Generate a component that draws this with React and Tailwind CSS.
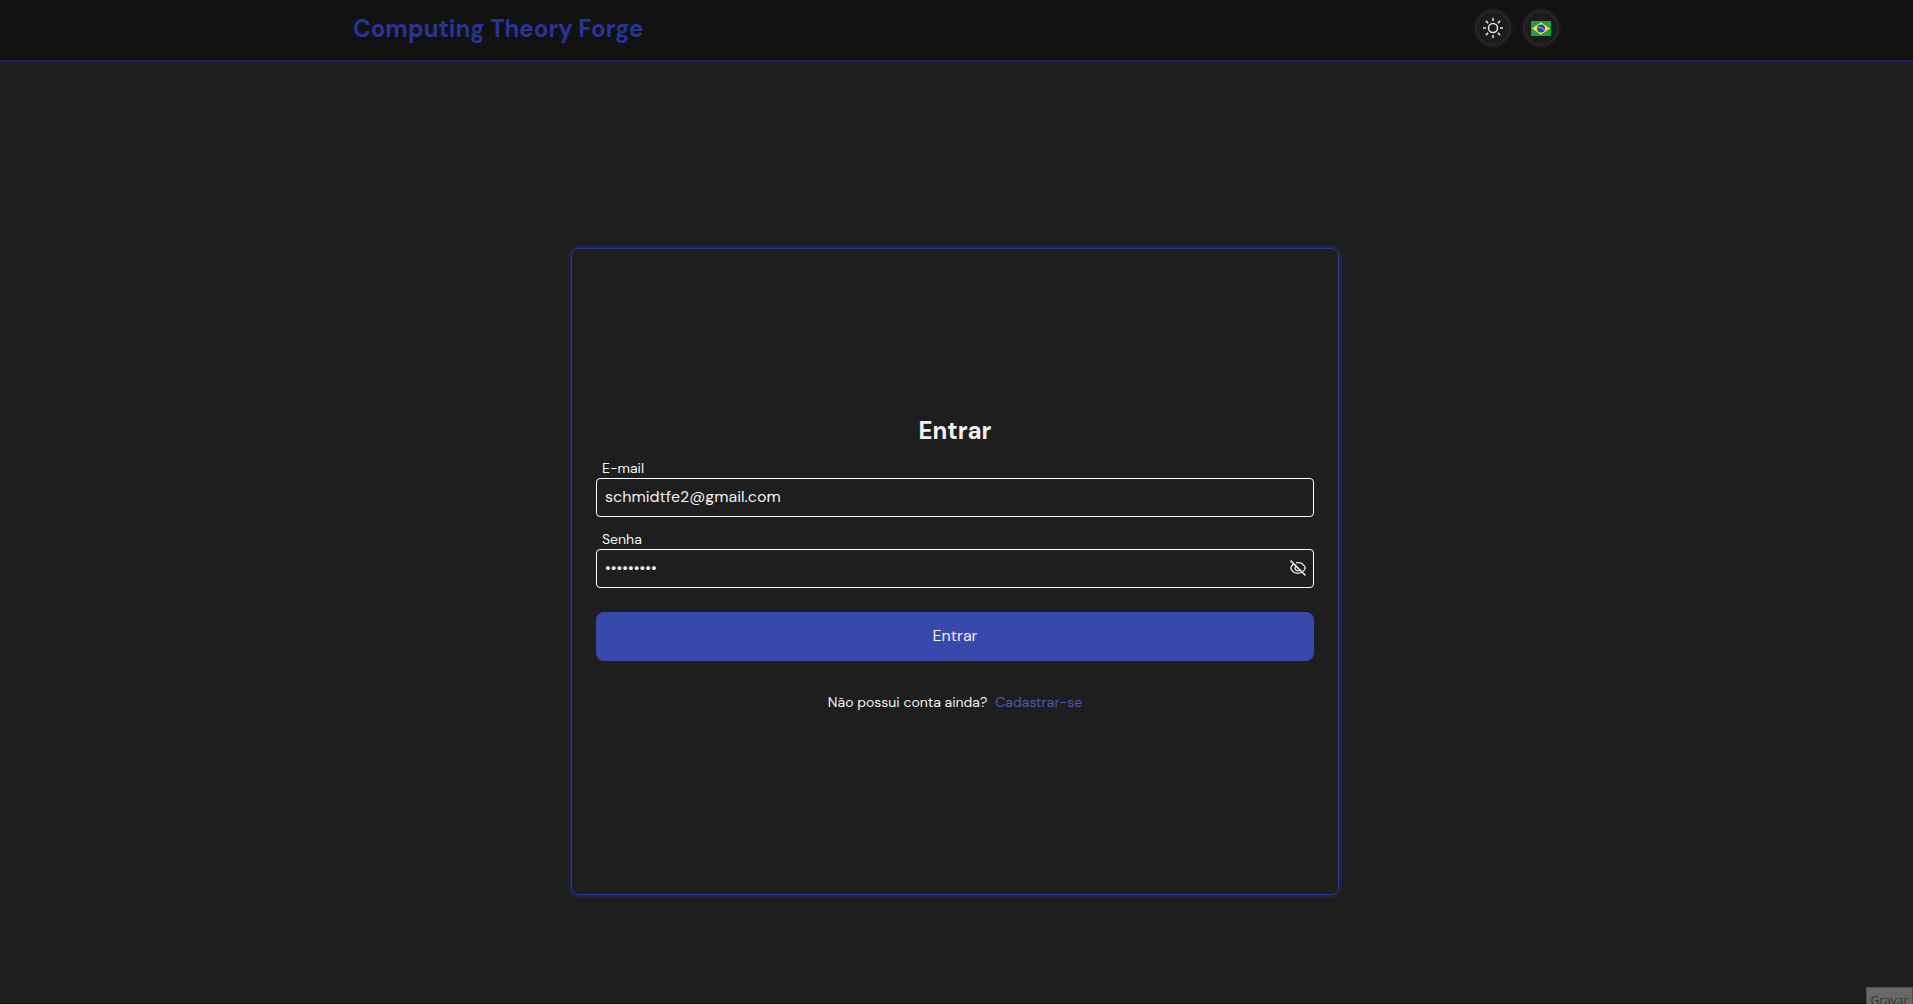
import { useState } from "react";

function SunIcon() {
  return (
    <svg viewBox="0 0 24 24" className="size-6" fill="none" stroke="#e4e4e4" strokeWidth="1.5" aria-hidden="true">
      <circle cx="12" cy="12" r="4.5" />
      <path d="M12 2v3M12 19v3M2 12h3M19 12h3M4.9 4.9l2.2 2.2M16.9 16.9l2.2 2.2M4.9 19.1l2.2-2.2M16.9 7.1l2.2-2.2" />
    </svg>
  );
}

function BrazilFlag() {
  return (
    <svg viewBox="0 0 20 15" className="h-[15px] w-5" aria-hidden="true">
      <path fill="#229e45" d="M0 0h20v15H0z" />
      <path fill="#f0e04f" d="M10 1.3 19 7.5 10 13.7 1 7.5z" />
      <circle cx="10" cy="7.5" r="4" fill="#2b49a3" />
      <path d="M6.3 6.3c2.8-.2 5.3.8 7.2 2.9" fill="none" stroke="#dfe7ef" strokeWidth=".6" />
    </svg>
  );
}

function EyeOffIcon() {
  return (
    <svg viewBox="0 0 16 16" className="size-4" fill="none" stroke="#e8e8e8" strokeWidth="1.3" aria-hidden="true">
      <path d="M3.8 3.9C2.5 4.8 1.3 6.2.7 8c1.3 3.3 4.2 5.3 7.3 5.3 1.4 0 2.7-.4 3.8-1M6 2.9C6.6 2.8 7.3 2.7 8 2.7c3.1 0 6 2 7.3 5.3-.5 1.3-1.3 2.4-2.3 3.3" />
      <path d="M5.8 6.4a2.7 2.7 0 0 0 3.8 3.8" />
      <path d="m.6.6 14.8 14.8" strokeWidth="1.5" />
    </svg>
  );
}

function RoundButton({ label, children, onClick }) {
  return (
    <button
      type="button"
      aria-label={label}
      onClick={onClick}
      className="flex size-8 items-center justify-center rounded-full bg-[#1c1c1c] shadow-[0_0_4px_1px_#404040]"
    >
      {children}
    </button>
  );
}

function Field({ id, label, type, value, onChange, autoComplete, children }) {
  return (
    <div className="flex flex-col">
      <label htmlFor={id} className="pl-1.5 text-sm leading-5">
        {label}
      </label>
      <div className="flex h-[39px] items-center rounded-sm border border-white px-2">
        <input
          id={id}
          type={type}
          value={value}
          onChange={(e) => onChange(e.target.value)}
          autoComplete={autoComplete}
          className="min-w-0 flex-1 bg-transparent text-base outline-none"
        />
        {children}
      </div>
    </div>
  );
}

export default function App() {
  const [email, setEmail] = useState("schmidtfe2@gmail.com");
  const [password, setPassword] = useState("forge1234");
  const [visible, setVisible] = useState(false);

  return (
    <div className="flex min-h-screen flex-col overflow-hidden border-b border-[#181014] bg-[#1e1e1e] font-['DM_Sans','Open_Sans',sans-serif] text-[#f2f2f2]">
      <header className="border-b border-[#20264f] bg-[#121212] pr-[3px] shadow-[0_1px_2px_#20264f]">
        <div className="mx-auto flex h-[60px] w-full max-w-[1204px] items-center justify-between pb-1">
          <h1 className="pt-0.5 text-2xl leading-8 font-bold text-[#283593]">Computing Theory Forge</h1>
          <div className="flex gap-4">
            <RoundButton label="Alternar tema">
              <SunIcon />
            </RoundButton>
            <RoundButton label="Idioma: Português">
              <BrazilFlag />
            </RoundButton>
          </div>
        </div>
      </header>

      <main className="flex flex-1 items-center justify-center pt-[78px] pr-[3px]">
        <form
          onSubmit={(e) => e.preventDefault()}
          className="flex min-h-[647px] w-full max-w-3xl flex-col justify-center rounded-lg border border-[#283593] px-6 pb-4 shadow-[0_0_5px_#283593]"
        >
          <h2 className="mb-[11px] text-center text-2xl font-bold">Entrar</h2>
          <div className="flex flex-col gap-3">
            <Field id="email" label="E-mail" type="email" value={email} onChange={setEmail} autoComplete="email" />
            <Field
              id="password"
              label="Senha"
              type={visible ? "text" : "password"}
              value={password}
              onChange={setPassword}
              autoComplete="current-password"
            >
              <button type="button" aria-label="Mostrar senha" onClick={() => setVisible(!visible)} className="-mr-px">
                <EyeOffIcon />
              </button>
            </Field>
          </div>
          <button type="submit" className="mt-6 h-[49px] rounded-lg bg-[#3949ab] text-base">
            Entrar
          </button>
          <p className="mt-[31px] flex justify-center gap-2 text-sm">
            Não possui conta ainda?
            <a href="#cadastro" className="text-[#4c5bb5]">
              Cadastrar-se
            </a>
          </p>
        </form>
      </main>

      <button
        type="button"
        className="fixed right-0 -bottom-[11px] h-7 w-[47px] border border-[#4b4d5c] bg-[#686868] font-['Open_Sans',sans-serif] text-xs text-[#303030]"
      >
        Gravar
      </button>
    </div>
  );
}
